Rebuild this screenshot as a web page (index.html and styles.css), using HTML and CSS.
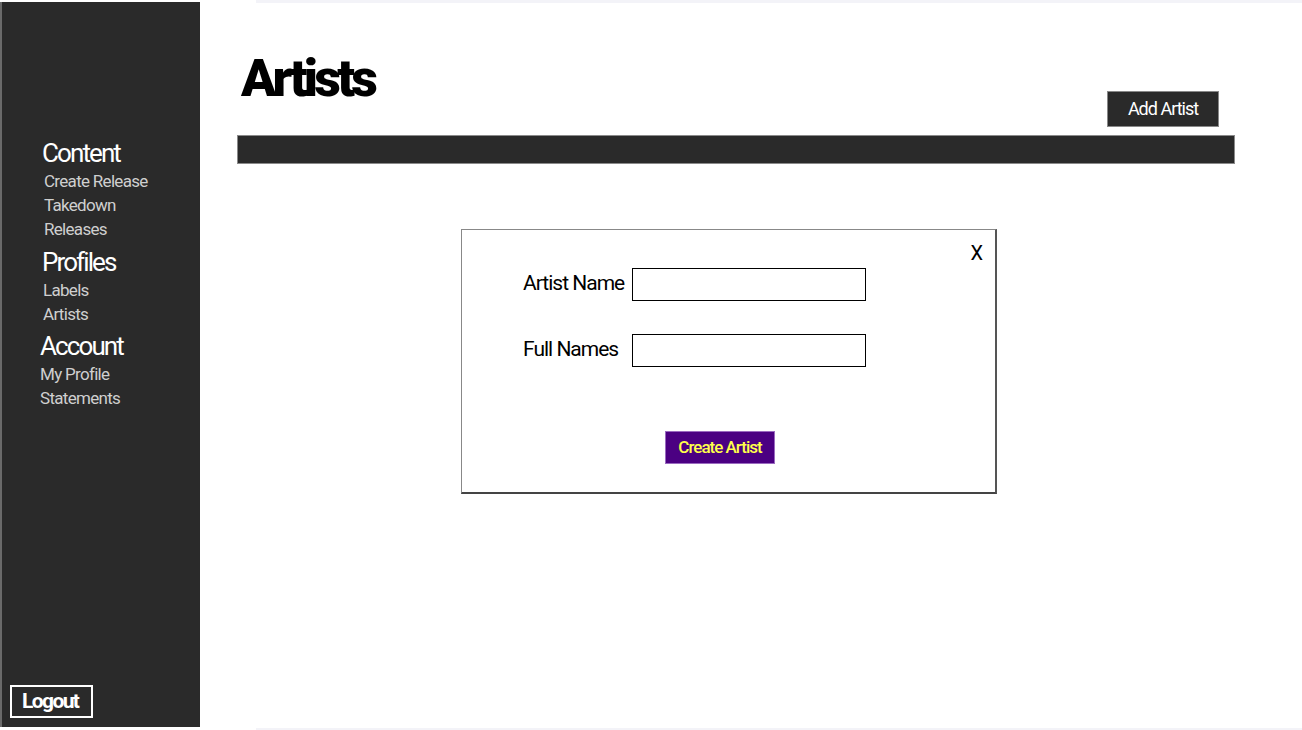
FILE: index.html
```html
<!DOCTYPE html>
<html lang="en">
<head>
<meta charset="utf-8">
<title>Artists</title>
<link rel="stylesheet" href="styles.css">
</head>
<body>
<div class="app">
  <aside class="sidebar">
    <nav class="nav">
      <div class="group">
        <div class="group-title">Content</div>
        <a class="item">Create Release</a>
        <a class="item">Takedown</a>
        <a class="item">Releases</a>
      </div>
      <div class="group group-profiles">
        <div class="group-title">Profiles</div>
        <a class="item">Labels</a>
        <a class="item">Artists</a>
      </div>
      <div class="group group-account">
        <div class="group-title">Account</div>
        <a class="item">My Profile</a>
        <a class="item">Statements</a>
      </div>
    </nav>
    <button class="logout">Logout</button>
  </aside>
  <main class="main">
    <div class="topline"></div>
    <header class="header">
      <h1 class="title">Artists</h1>
      <button class="add-btn">Add Artist</button>
    </header>
    <div class="bar"></div>
    <section class="modal">
      <span class="close">X</span>
      <form class="form">
        <label class="label">Artist Name</label>
        <input class="input" type="text">
        <label class="label">Full Names</label>
        <input class="input input-2" type="text">
      </form>
      <button class="create-btn">Create Artist</button>
    </section>
    <div class="bottomline"></div>
  </main>
</div>
</body>
</html>
```

FILE: styles.css
```css
* { box-sizing: border-box; }
html, body { margin: 0; padding: 0; background: #fff; }
body {
  font-family: Roboto, "Liberation Sans", sans-serif;
  width: 1302px;
  height: 730px;
  overflow: hidden;
}
.app { display: flex; height: 730px; }

.sidebar {
  width: 200px;
  flex: none;
  margin-top: 2px;
  height: 725px;
  background: #2a2a2a;
  border-left: 2px solid #6a6a6a;
  display: flex;
  flex-direction: column;
}
.nav { padding-top: 135px; display: flex; flex-direction: column; }
.group { display: flex; flex-direction: column; padding-left: 40px; }
.group-title {
  color: #fff;
  font-size: 26px;
  line-height: 32px;
  height: 32px;
  letter-spacing: -1.9px;
  white-space: nowrap;
}
.item {
  color: #cfcfcf;
  font-size: 17px;
  line-height: 24px;
  padding-left: 2px;
  letter-spacing: -0.7px;
  white-space: nowrap;
}
.group-profiles { margin-top: 5px; }
.group-profiles .item { padding-left: 1px; }
.group-account { margin-top: 4px; padding-left: 38px; }
.group-account .item { padding-left: 0; }

.logout {
  margin-top: auto;
  margin-left: 8px;
  margin-bottom: 9px;
  width: 83px;
  height: 33px;
  background: #2a2a2a;
  border: 2px solid #fff;
  color: #fff;
  font-family: inherit;
  font-weight: bold;
  font-size: 21px;
  letter-spacing: -1.6px;
  padding: 0 0 2px 10px;
  text-align: left;
}

.main { flex: 1; display: flex; flex-direction: column; position: relative; }
.topline { height: 3px; margin-left: 56px; background: #f3f3f8; }
.header {
  display: flex;
  justify-content: space-between;
  padding-left: 41px;
  padding-right: 83px;
  height: 132px;
}
.title {
  margin: 0;
  margin-top: 44px;
  font-size: 52px;
  line-height: 64px;
  font-weight: 900;
  color: #000;
  letter-spacing: -3.8px;
  height: 64px;
}
.add-btn {
  margin-top: 88px;
  width: 112px;
  height: 36px;
  background: #2a2a2a;
  border: 1px solid #888;
  color: #fff;
  font-family: inherit;
  font-size: 18px;
  letter-spacing: -1px;
  padding: 0 0 1px;
}
.bar {
  margin-left: 37px;
  width: 998px;
  height: 29px;
  background: #2a2a2a;
  border: 1px solid #8a8a8a;
}
.modal {
  position: relative;
  margin-top: 65px;
  margin-left: 261px;
  width: 536px;
  height: 265px;
  border: 1px solid #888;
  border-right: 2px solid #555;
  border-bottom: 2px solid #444;
  background: #fff;
  padding: 38px 0 0 61px;
}
.close {
  position: absolute;
  right: 12px;
  top: 13px;
  font-size: 20px;
  line-height: 20px;
  color: #000;
}
.form {
  display: grid;
  grid-template-columns: 109px 234px;
  row-gap: 33px;
  align-items: center;
}
.label {
  font-size: 21px;
  color: #000;
  letter-spacing: -1px;
  white-space: nowrap;
  padding-bottom: 4px;
}
.input {
  height: 33px;
  width: 234px;
  border: 1px solid #000;
  margin: 0;
  padding: 0;
  background: #fff;
}
.create-btn {
  display: block;
  margin-top: 64px;
  margin-left: 142px;
  width: 110px;
  height: 33px;
  background: #4b0082;
  border: 1px solid #9a6ac0;
  color: #ffff4a;
  font-family: inherit;
  font-weight: 500;
  font-size: 17px;
  letter-spacing: -1px;
  padding: 0 0 2px;
  white-space: nowrap;
}
.bottomline {
  position: absolute;
  left: 56px;
  right: 0;
  bottom: 0;
  height: 2px;
  background: #f3f3f8;
}
```
